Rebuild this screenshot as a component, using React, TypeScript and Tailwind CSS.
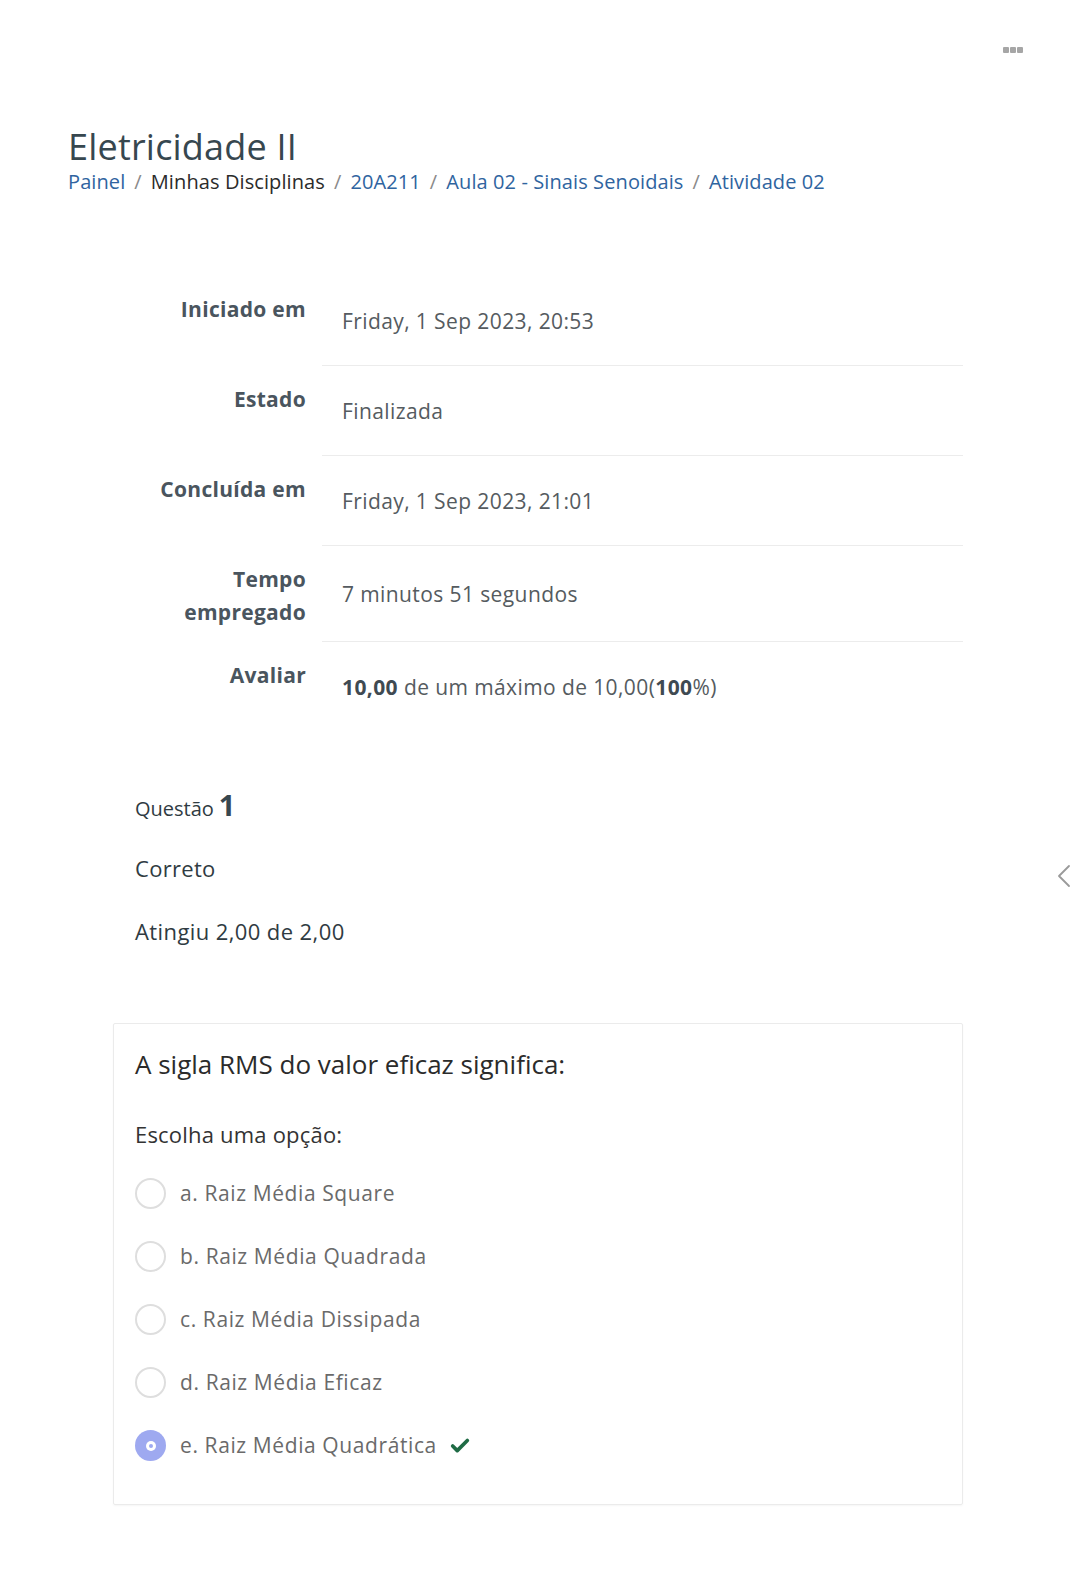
import { Check, ChevronLeft } from "lucide-react";

const summary = [
  { label: ["Iniciado em"], value: "Friday, 1 Sep 2023, 20:53", border: true },
  { label: ["Estado"], value: "Finalizada", border: true },
  { label: ["Concluída em"], value: "Friday, 1 Sep 2023, 21:01", border: true },
  { label: ["Tempo", "empregado"], value: "7 minutos 51 segundos", border: true },
  { label: ["Avaliar"], value: null, border: false },
];

const options = [
  { key: "a", text: "Raiz Média Square" },
  { key: "b", text: "Raiz Média Quadrada" },
  { key: "c", text: "Raiz Média Dissipada" },
  { key: "d", text: "Raiz Média Eficaz" },
  { key: "e", text: "Raiz Média Quadrática", checked: true },
];

export default function App() {
  return (
    <div
      className="relative min-h-[1573px] w-[1079px] bg-white text-[#3a4750]"
      style={{ fontFamily: '"Open Sans", "Noto Sans", sans-serif' }}
    >
      {/* top-right menu dots */}
      <div className="flex justify-end gap-[1px] pr-[56px] pt-[47px]">
        <span className="h-[6px] w-[6px] rounded-[1px] bg-[#a6a6a6]" />
        <span className="h-[6px] w-[6px] rounded-[1px] bg-[#a6a6a6]" />
        <span className="h-[6px] w-[6px] rounded-[1px] bg-[#a6a6a6]" />
      </div>

      {/* side chevron */}
      <div className="absolute left-[1044px] top-[856px] text-[#9a9a9a]">
        <ChevronLeft size={40} strokeWidth={1.1} />
      </div>

      <header className="px-[68px] pt-[72px]">
        <h1 className="text-[36px] leading-[44px] tracking-[0.2px] text-[#37474f]">Eletricidade II</h1>
        <nav className="flex items-center gap-[9px] text-[20px] leading-[26px] tracking-[0.1px]">
          <span className="text-[#2f64a0]">Painel</span>
          <span className="text-[#8a8a8a]">/</span>
          <span className="text-[#2b2b2b]">Minhas Disciplinas</span>
          <span className="text-[#8a8a8a]">/</span>
          <span className="text-[#2f64a0]">20A211</span>
          <span className="text-[#8a8a8a]">/</span>
          <span className="text-[#2f64a0]">Aula 02 - Sinais Senoidais</span>
          <span className="text-[#8a8a8a]">/</span>
          <span className="text-[#2f64a0]">Atividade 02</span>
        </nav>
      </header>

      <main className="ml-[113px] mr-[116px]">
        {/* attempt summary */}
        <div className="mt-[81px]">
          {summary.map((row) => (
            <div key={row.label.join(" ")} className="flex">
              <div className="w-[209px] shrink-0 pb-[13px] pr-[16px] pt-[17px] text-right text-[21px] font-bold leading-[33px] tracking-[0.3px] text-[#4a555e]">
                {row.label.map((l) => (
                  <div key={l}>{l}</div>
                ))}
              </div>
              <div
                className={`flex min-h-[90px] flex-1 items-center pl-[20px] pt-[2px] text-[21px] tracking-[0.4px] text-[#555b60] ${
                  row.border ? "border-b border-[#ececec]" : ""
                }`}
              >
                {row.value ?? (
                  <span>
                    <b className="text-[#3f4a52]">10,00</b> de um máximo de 10,00(
                    <b className="text-[#3f4a52]">100</b>%)
                  </span>
                )}
              </div>
            </div>
          ))}
        </div>

        {/* question info */}
        <div className="mt-[58px] pl-[22px] text-[#2f3b42]">
          <div className="flex items-baseline gap-[5px]">
            <span className="text-[20px]">Questão</span>
            <span className="text-[29px] font-bold leading-none text-[#37474f]">1</span>
          </div>
          <p className="mt-[29px] text-[22px] leading-[30px] tracking-[0.3px]">Correto</p>
          <p className="mt-[33px] text-[22px] leading-[30px] tracking-[0.4px]">Atingiu 2,00 de 2,00</p>
        </div>

        {/* question card */}
        <div className="mt-[77px] rounded-[2px] border border-[#ebebeb] px-[21px] pb-[43px] pt-[24px] shadow-[0_1px_2px_rgba(0,0,0,0.04)]">
          <p className="text-[26px] leading-[32px] text-[#2b2b2b]">A sigla RMS do valor eficaz significa:</p>
          <p className="mt-[39px] text-[22px] leading-[30px] tracking-[0.2px] text-[#333]">Escolha uma opção:</p>
          <div className="mt-[29px] flex flex-col gap-[32px]">
            {options.map((o) => (
              <div key={o.key} className="flex h-[31px] items-center">
                {o.checked ? (
                  <span className="flex h-[31px] w-[31px] items-center justify-center rounded-full bg-[#9ea9f0]">
                    <span className="flex h-[10px] w-[10px] items-center justify-center rounded-full bg-white">
                      <span className="h-[4px] w-[4px] rounded-full bg-[#9ea9f0]" />
                    </span>
                  </span>
                ) : (
                  <span className="h-[31px] w-[31px] rounded-full border-2 border-[#dedede]" />
                )}
                <span className="ml-[14px] text-[21px] tracking-[0.6px] text-[#6a6a6a]">
                  {o.key}. {o.text}
                </span>
                {o.checked && <Check size={22} strokeWidth={4} className="ml-[12px] text-[#1f6b45]" />}
              </div>
            ))}
          </div>
        </div>
      </main>
    </div>
  );
}
